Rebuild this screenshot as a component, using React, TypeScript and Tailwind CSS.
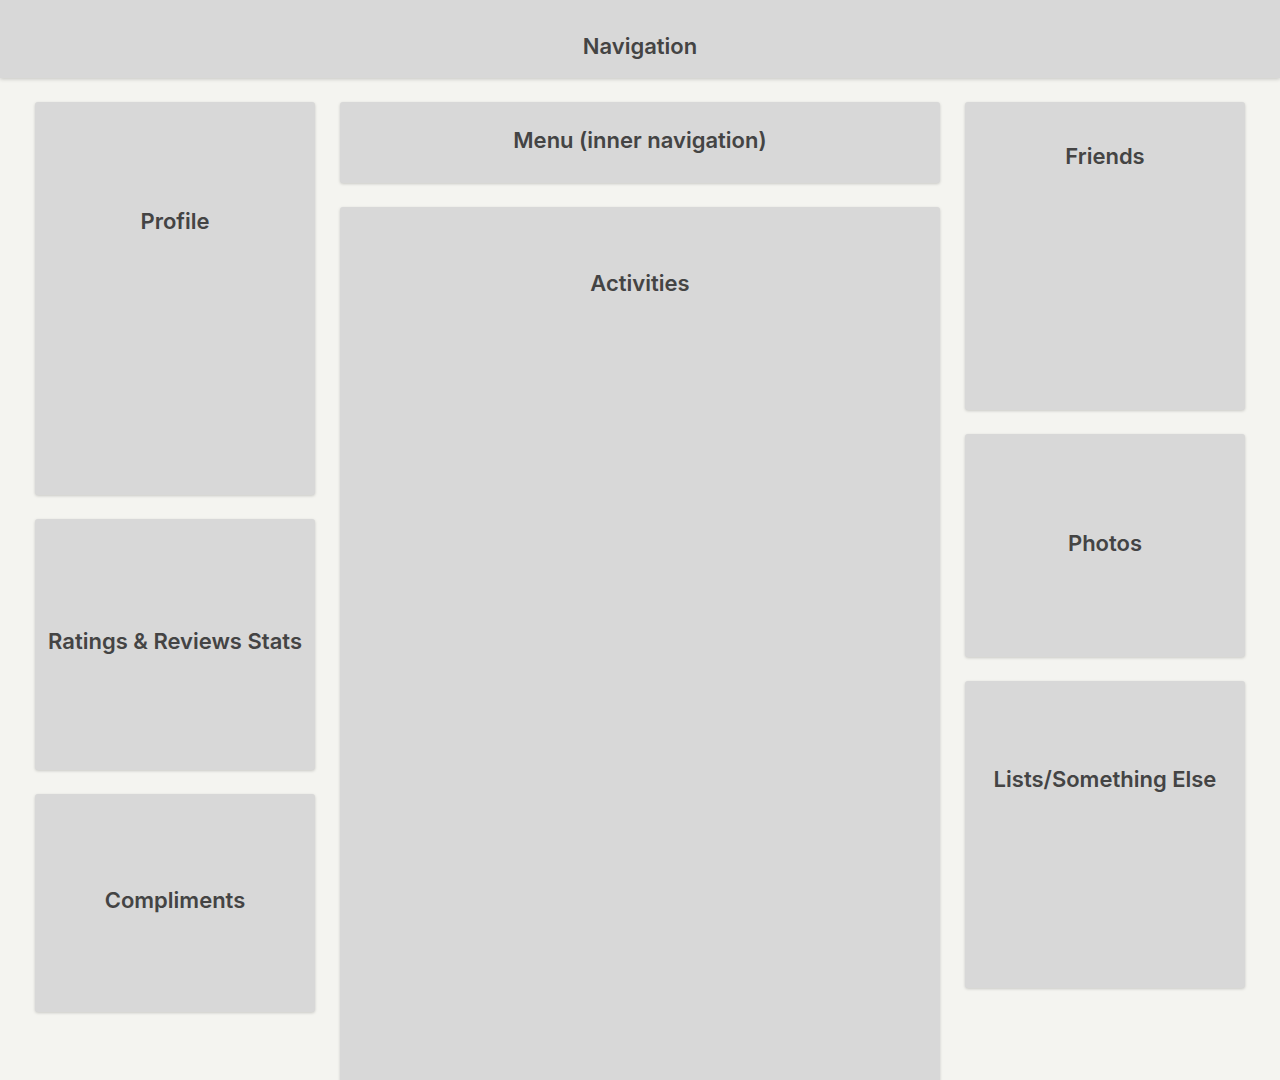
const Box = ({ label, className }: { label: string; className: string }) => (
  <div
    className={`bg-[#d8d8d8] rounded-[3px] shadow-[0_1px_3px_rgba(0,0,0,0.18)] flex justify-center text-center ${className}`}
  >
    <span className="leading-7">{label}</span>
  </div>
);

export default function App() {
  return (
    <div
      className="min-h-[1080px] bg-[#f4f4f0] text-[#444444] text-[22px] font-semibold overflow-hidden"
      style={{ fontFamily: "Inter, 'Open Sans', sans-serif" }}
    >
      <div className="h-[78px] bg-[#d8d8d8] shadow-[0_1px_4px_rgba(0,0,0,0.2)] flex justify-center pt-[32px]">
        <span className="leading-7">Navigation</span>
      </div>

      <div className="flex gap-[25px] px-[35px] pt-[24px]">
        <div className="w-[280px] flex flex-col gap-[24px]">
          <Box label="Profile" className="h-[393px] pt-[105px]" />
          <Box label="Ratings & Reviews Stats" className="h-[251px] items-center pb-[8px]" />
          <Box label="Compliments" className="h-[218px] items-center pb-[6px]" />
        </div>

        <div className="w-[600px] flex flex-col gap-[24px]">
          <Box label="Menu (inner navigation)" className="h-[81px] items-center pb-[5px]" />
          <Box label="Activities" className="h-[900px] pt-[62px]" />
        </div>

        <div className="w-[280px] flex flex-col gap-[24px]">
          <Box label="Friends" className="h-[308px] pt-[40px]" />
          <Box label="Photos" className="h-[223px] items-center pb-[5px]" />
          <Box label="Lists/Something Else" className="h-[307px] pt-[84px]" />
        </div>
      </div>
    </div>
  );
}
